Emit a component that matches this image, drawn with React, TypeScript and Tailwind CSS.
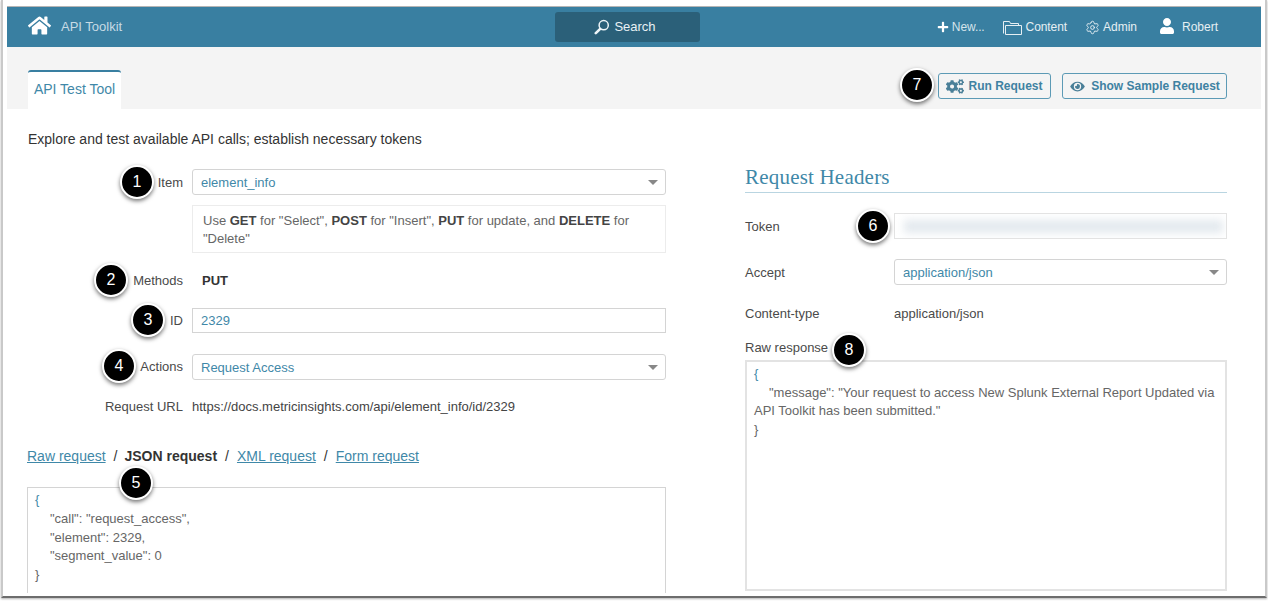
import React from "react";
import { FaHome, FaPlus, FaUser, FaCogs, FaEye } from "react-icons/fa";
import { Settings } from "lucide-react";

const Caret = () => (
  <span className="ml-auto w-0 h-0 border-x-[5px] border-x-transparent border-t-[5px] border-t-[#888]" />
);

const Badge = ({ n, className }: { n: number; className: string }) => (
  <div
    className={
      "absolute w-[34px] h-[34px] rounded-full bg-black border-2 border-white shadow-[0_2px_4px_rgba(0,0,0,0.55)] flex items-center justify-center text-white text-[16px] " +
      className
    }
  >
    {n}
  </div>
);

const Select = ({ value }: { value: string }) => (
  <div className="flex-1 h-[26px] border border-[#d4d4d4] rounded-[3px] flex items-center pl-2 pr-[7px] pt-px text-[#3f88a8] text-[13px]">
    {value}
    <Caret />
  </div>
);

const Row = ({ label, className, labelClass = "", children }: { label: string; className: string; labelClass?: string; children: React.ReactNode }) => (
  <div className={"flex items-center " + className}>
    <div className={"w-[155px] shrink-0 text-right text-[#4a4a4a] text-[13px] " + labelClass}>{label}</div>
    <div className="ml-[9px] flex-1 flex items-center min-w-0">{children}</div>
  </div>
);

export default function App() {
  return (
    <div className="relative w-[1268px] h-[601px] overflow-hidden bg-white font-['Liberation_Sans',Arial,sans-serif] text-[#333]">
      <div className="h-[598px] mt-0 ml-px mr-px border-x-2 border-x-[#c9c9c9] border-b-2 border-b-[#6d6d6d] pt-[6px] px-[4px] overflow-hidden shadow-[0_1px_2px_rgba(0,0,0,0.3)]">
        <div className="h-px bg-[#b5b5b5]" />
        {/* top bar */}
        <header className="h-[40px] bg-[#397fa1] flex items-center text-[#e6eff3] text-[12px] relative">
          <FaHome className="ml-[21px] text-white w-[23px] h-[23px] -mt-[3px]" />
          <span className="ml-[10px] text-[13px] text-[#c7dbe5]">API Toolkit</span>
          <div className="absolute left-[548px] top-[5px] w-[145px] h-[30px] bg-[#2b6079] rounded-[3px] flex items-center justify-center gap-[4px] pr-[5px] text-[13px] text-[#e8f1f5]">
            <svg width="16" height="16" viewBox="0 0 16 16" fill="none" stroke="#eef5f8">
              <circle cx="9.7" cy="6.2" r="4.6" strokeWidth="1.5" />
              <path d="M6.2 9.8 1.8 14.2" strokeWidth="2.6" strokeLinecap="round" />
            </svg>
            Search
          </div>
          <div className="ml-auto flex items-center mr-[43px]">
            <FaPlus className="w-[12px] h-[12px] text-white" />
            <span className="ml-[3px] tracking-[-0.1px] text-[#d5e4eb]">New...</span>
            <svg className="ml-[18px]" width="19" height="15" viewBox="0 0 19 15" fill="none" stroke="#e6eff3" strokeWidth="1">
              <path d="M.5 13.5V1.5h6l1 2h8v2" />
              <path d="M2.5 14.5V5.5h16v9z" />
            </svg>
            <span className="ml-[4px] tracking-[-0.1px]">Content</span>
            <Settings className="ml-[18px] text-[#e6eff3]" size={15} strokeWidth={1.5} />
            <span className="ml-[3px]">Admin</span>
            <FaUser className="ml-[22px] w-[16px] h-[16px] text-white -mt-[3px]" />
            <span className="ml-[7px]">Robert</span>
          </div>
        </header>
        {/* tab bar */}
        <div className="h-[62px] bg-[#f4f4f4] flex items-end pl-[21px] pr-[34px] relative">
          <div className="w-[93px] h-[39px] bg-white border-t-2 border-t-[#397fa1] rounded-t-[3px] flex items-center justify-center pb-[2px] text-[14px] text-[#3f88a8]">
            API Test Tool
          </div>
          <div className="ml-auto self-start mt-[26px] flex gap-[11px] text-[12px] font-bold text-[#3f82a2]">
            <div className="w-[113px] h-[26px] border border-[#5c9ab5] rounded-[3px] flex items-center justify-center gap-[4px]">
              <FaCogs className="w-[18px] h-[15px] text-[#4a7f98]" />
              Run Request
            </div>
            <div className="w-[165px] h-[26px] border border-[#5c9ab5] rounded-[3px] flex items-center justify-center gap-[5px]">
              <FaEye className="w-[17px] h-[13px] text-[#4a7f98]" />
              Show Sample Request
            </div>
          </div>
        </div>
        {/* content */}
        <div className="pl-[21px] pr-[34px] pt-[21px]">
          <p className="text-[14px] leading-[18px] text-[#333]">Explore and test available API calls; establish necessary tokens</p>
          <div className="flex mt-[12px]">
            {/* left */}
            <div className="w-[638px] shrink-0">
              <Row label="Item" labelClass="pt-px" className="h-[26px] mt-[9px]">
                <Select value="element_info" />
              </Row>
              <div className="ml-[164px] mt-[10px] h-[48px] border border-[#ececec] px-[10px] py-[6px] text-[13px] leading-[18px] text-[#666]">
                Use <b className="text-[#444]">GET</b> for "Select", <b className="text-[#444]">POST</b> for "Insert", <b className="text-[#444]">PUT</b> for update, and <b className="text-[#444]">DELETE</b> for "Delete"
              </div>
              <Row label="Methods" className="h-[26px] mt-[15px]">
                <span className="ml-[10px] text-[13px] font-bold text-[#333]">PUT</span>
              </Row>
              <Row label="ID" className="h-[25px] mt-[14px]">
                <div className="flex-1 h-[25px] border border-[#d4d4d4] flex items-center pl-2 pt-px text-[#3f88a8] text-[13px]">2329</div>
              </Row>
              <Row label="Actions" className="h-[26px] mt-[21px]">
                <Select value="Request Access" />
              </Row>
              <Row label="Request URL" className="h-[18px] mt-[18px]">
                <span className="text-[13px] text-[#444]">https://docs.metricinsights.com/api/element_info/id/2329</span>
              </Row>
              <div className="-ml-px mt-[31px] text-[14px] leading-[18px] text-[#333]">
                <a className="underline text-[#3f88a8]">Raw request</a>
                <span className="ml-[8px] mr-[7px]">/</span>
                <b>JSON request</b>
                <span className="mx-[8px]">/</span>
                <a className="underline text-[#3f88a8]">XML request</a>
                <span className="mx-[8px]">/</span>
                <a className="underline text-[#3f88a8]">Form request</a>
              </div>
              <div className="-ml-px mt-[22px] h-[106px] border border-b-0 border-[#d4d4d4] pl-[7px] pt-[3px] text-[13px] leading-[18.8px] text-[#666]">
                <div className="text-[#3f88a8]">{"{"}</div>
                <div className="pl-[15px]">"call": "request_access",</div>
                <div className="pl-[15px]">"element": 2329,</div>
                <div className="pl-[15px]">"segment_value": 0</div>
                <div>{"}"}</div>
              </div>
            </div>
            {/* right */}
            <div className="ml-[79px] flex-1 min-w-0 mt-[4px]">
              <h2 className="h-[29px] border-b border-b-[#b9d5e1] font-['Liberation_Serif',serif] text-[21px] leading-[26px] tracking-[0.2px] text-[#3f88a8]">Request Headers</h2>
              <div className="flex items-center mt-[20px] h-[26px]">
                <span className="w-[149px] pt-px text-[13px] text-[#4a4a4a]">Token</span>
                <div className="flex-1 h-[26px] border border-[#e3e3e3] flex items-center overflow-hidden pl-[9px] pr-[3px]">
                  <div className="w-full h-[13px] bg-[#e3e9ee] blur-[4px]" />
                </div>
              </div>
              <div className="flex items-center mt-[20px] h-[26px]">
                <span className="w-[149px] pt-px text-[13px] text-[#4a4a4a]">Accept</span>
                <Select value="application/json" />
              </div>
              <div className="flex items-center mt-[20px] h-[18px] text-[13px] text-[#4a4a4a]">
                <span className="w-[149px]">Content-type</span>
                <span>application/json</span>
              </div>
              <div className="mt-[17px] text-[13px] leading-[16px] text-[#4a4a4a]">Raw response</div>
              <div className="mt-[4px] h-[231px] border-2 border-[#e3e3e3] pl-[7px] pt-[3px] text-[13px] leading-[18.5px] text-[#666]">
                <div className="text-[#3f88a8]">{"{"}</div>
                <div className="indent-[15px]">"message": "Your request to access New Splunk External Report Updated via</div>
                <div>API Toolkit has been submitted."</div>
                <div>{"}"}</div>
              </div>
            </div>
          </div>
        </div>
      </div>
      {/* annotation badges */}
      <Badge n={1} className="left-[120px] top-[165px]" />
      <Badge n={2} className="left-[94px] top-[263px]" />
      <Badge n={3} className="left-[131px] top-[303px]" />
      <Badge n={4} className="left-[102px] top-[349px]" />
      <Badge n={5} className="left-[119px] top-[466px]" />
      <Badge n={6} className="left-[856px] top-[209px]" />
      <Badge n={7} className="left-[900px] top-[68px]" />
      <Badge n={8} className="left-[832px] top-[333px]" />
    </div>
  );
}
